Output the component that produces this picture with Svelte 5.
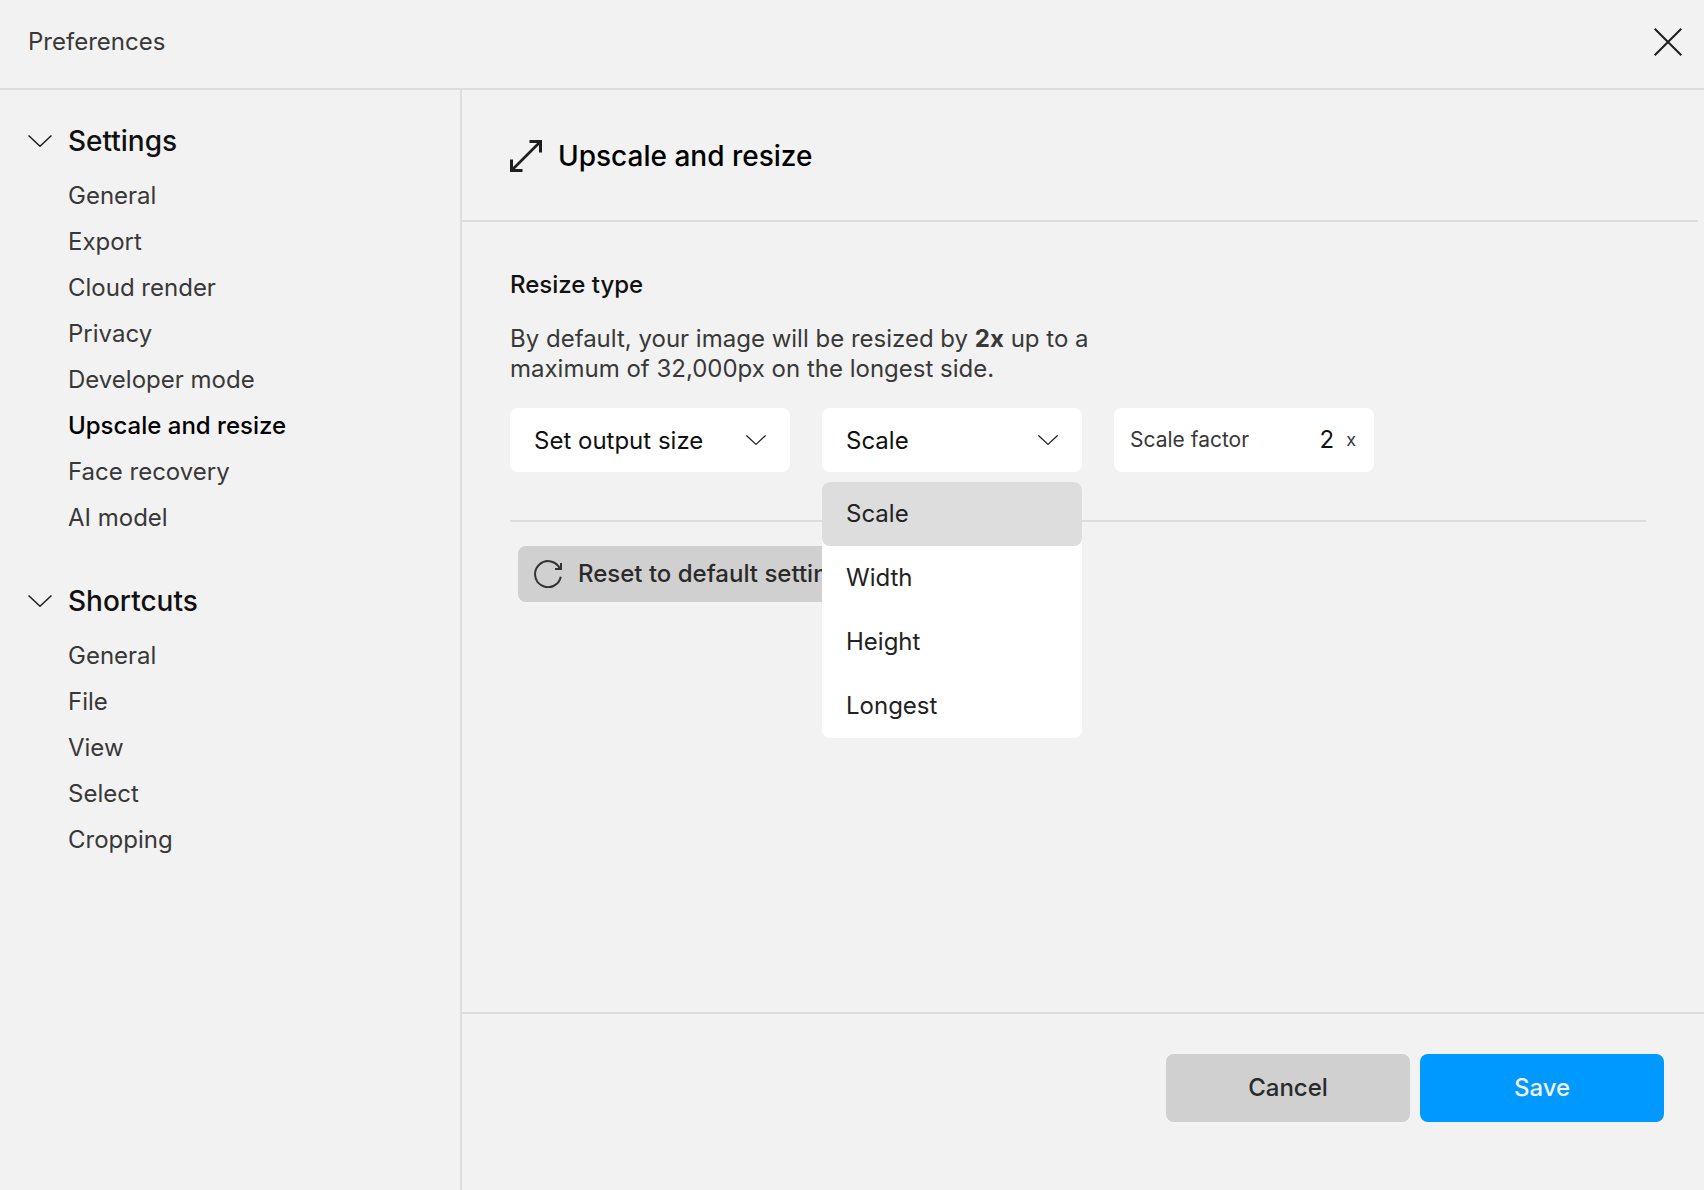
<script lang="ts">
	type NavGroup = { title: string; items: string[] };

	const groups: NavGroup[] = [
		{
			title: 'Settings',
			items: [
				'General',
				'Export',
				'Cloud render',
				'Privacy',
				'Developer mode',
				'Upscale and resize',
				'Face recovery',
				'AI model'
			]
		},
		{ title: 'Shortcuts', items: ['General', 'File', 'View', 'Select', 'Cropping'] }
	];
	const resizeModes = ['Scale', 'Width', 'Height', 'Longest'];

	let collapsed = $state<Record<string, boolean>>({});
	let activeItem = $state('Settings/Upscale and resize');
	let outputMode = $state('Set output size');
	let resizeMode = $state('Scale');
	let scaleFactor = $state('2');
	let menuOpen = $state(true);

	function pickMode(mode: string) {
		resizeMode = mode;
		menuOpen = false;
	}

	// The mode list is our own menu, so keep the native popup closed
	function toggleMenu(event: MouseEvent) {
		event.preventDefault();
		menuOpen = !menuOpen;
	}

	function reset() {
		outputMode = 'Set output size';
		resizeMode = 'Scale';
		scaleFactor = '2';
	}
</script>

{#snippet chevron(size: number)}
	<svg class="chevron" width={size} height={size / 2} viewBox="0 0 24 12" aria-hidden="true">
		<path d="M0.5 0.5 L12 11.2 L23.5 0.5" />
	</svg>
{/snippet}

<div class="preferences">
	<header class="title-bar">
		<h1>Preferences</h1>
		<button class="close" aria-label="Close">
			<svg width="28" height="28" viewBox="0 0 28 28" aria-hidden="true">
				<path d="M0.7 0.7 L27.3 27.3 M27.3 0.7 L0.7 27.3" />
			</svg>
		</button>
	</header>

	<div class="body">
		<nav class="sidebar" aria-label="Preferences sections">
			{#each groups as group}
				<section class="group">
					<button
						class="group-title"
						aria-expanded={!collapsed[group.title]}
						onclick={() => (collapsed[group.title] = !collapsed[group.title])}
					>
						{@render chevron(24)}
						<span>{group.title}</span>
					</button>
					{#if !collapsed[group.title]}
						<ul>
							{#each group.items as item}
								{@const id = `${group.title}/${item}`}
								<li>
									<a href="#{group.title}" class:active={id === activeItem} onclick={() => (activeItem = id)}>
										{item}
									</a>
								</li>
							{/each}
						</ul>
					{/if}
				</section>
			{/each}
		</nav>

		<main class="panel">
			<div class="panel-header">
				<svg width="32" height="32" viewBox="0 0 32 32" aria-hidden="true">
					<path d="M2 30 L30 2" />
					<path class="head" d="M19.5 1.5 H30.5 V12.5 M1.5 19.5 V30.5 H12.5" />
				</svg>
				<h2>Upscale and resize</h2>
			</div>

			<div class="panel-content">
				<h3>Resize type</h3>
				<p>
					By default, your image will be resized by <strong>2x</strong> up to a maximum of 32,000px on the
					longest side.
				</p>

				<div class="controls">
					<div class="dropdown wide">
						<select aria-label="Output size" bind:value={outputMode}>
							<option>Set output size</option>
							<option>Original size</option>
						</select>
						{@render chevron(20)}
					</div>

					<div class="dropdown">
						<select aria-label="Resize mode" bind:value={resizeMode} onmousedown={toggleMenu}>
							{#each resizeModes as mode}
								<option>{mode}</option>
							{/each}
						</select>
						{@render chevron(20)}

						{#if menuOpen}
							<div class="menu" role="listbox" aria-label="Resize mode">
								{#each resizeModes as mode}
									<button role="option" aria-selected={mode === resizeMode} onclick={() => pickMode(mode)}>
										{mode}
									</button>
								{/each}
							</div>
						{/if}
					</div>

					<div class="factor">
						<label for="scale-factor">Scale factor</label>
						<input id="scale-factor" type="text" inputmode="decimal" bind:value={scaleFactor} />
						<span class="unit">x</span>
					</div>
				</div>

				<div class="actions">
					<button class="reset" onclick={reset}>
						<svg width="28" height="28" viewBox="0 0 28 28" aria-hidden="true">
							<path d="M26.8 16.8 A13 13 0 1 1 26 9 M27 3 V9 H21" />
						</svg>
						<span>Reset to default settings</span>
					</button>
				</div>
			</div>

			<footer>
				<button class="cancel">Cancel</button>
				<button class="save">Save</button>
			</footer>
		</main>
	</div>
</div>

<style>
	:global(body) {
		background: #f2f2f2;
	}

	.preferences {
		display: flex;
		flex-direction: column;
		min-height: 100vh;
		font-family: Inter, sans-serif;
		font-size: 24px;
		line-height: 30px;
		color: #383838;
		background: #f2f2f2;
	}

	h1,
	h2,
	h3,
	p,
	ul {
		margin: 0;
		padding: 0;
		font-size: inherit;
		font-weight: 400;
	}

	button,
	select,
	input {
		font: inherit;
		color: inherit;
		border: none;
		background: none;
		padding: 0;
		margin: 0;
	}

	button {
		cursor: pointer;
	}

	svg {
		display: block;
		flex: none;
		fill: none;
		stroke: #1e1e1e;
	}

	.chevron {
		stroke-width: 1.5;
	}

	/* Title bar */
	.title-bar {
		display: flex;
		align-items: center;
		justify-content: space-between;
		height: 84px;
		padding: 0 22px 4px 28px;
		border-bottom: 2px solid #dddddd;
	}

	.close svg {
		stroke-width: 2;
	}

	.body {
		display: flex;
		flex: 1;
	}

	/* Sidebar */
	.sidebar {
		box-sizing: border-box;
		flex: none;
		width: 462px;
		padding: 33px 28px;
		border-right: 2px solid #dddddd;
	}

	.group {
		margin-bottom: 42px;
	}

	.group-title {
		display: flex;
		align-items: center;
		gap: 16px;
		height: 36px;
		margin-bottom: 14px;
		font-size: 28px;
		font-weight: 500;
		color: #111;
	}

	ul {
		list-style: none;
		padding-left: 40px;
	}

	li {
		line-height: 46px;
	}

	a {
		color: inherit;
		text-decoration: none;
	}

	a.active {
		font-weight: 500;
		color: #000;
	}

	/* Panel */
	.panel {
		display: flex;
		flex: 1;
		flex-direction: column;
		min-width: 0;
	}

	.panel-header {
		box-sizing: border-box;
		display: flex;
		align-items: center;
		gap: 16px;
		height: 132px;
		margin-right: 6px;
		padding: 2px 0 0 48px;
		border-bottom: 2px solid #dddddd;
	}

	.panel-header svg {
		stroke-width: 2.6;
	}

	.panel-header .head {
		stroke-width: 3;
	}

	h2 {
		font-size: 28px;
		font-weight: 500;
		color: #000;
	}

	.panel-content {
		flex: 1;
		padding: 48px 58px 0 48px;
	}

	h3 {
		margin-bottom: 24px;
		font-weight: 500;
		color: #111;
	}

	p {
		max-width: 600px;
		margin-bottom: 24px;
	}

	strong {
		font-weight: 700;
	}

	.controls {
		display: flex;
		gap: 32px;
		padding-bottom: 48px;
		border-bottom: 2px solid #dddddd;
	}

	.dropdown {
		position: relative;
		width: 260px;
	}

	.dropdown.wide {
		width: 280px;
	}

	select {
		appearance: none;
		width: 100%;
		height: 64px;
		padding: 2px 60px 0 24px;
		border-radius: 8px;
		color: #111;
		background: #fff;
	}

	/* Arrow sits on top of the native control */
	.dropdown .chevron {
		position: absolute;
		top: 27px;
		right: 24px;
		pointer-events: none;
	}

	.menu {
		position: absolute;
		top: 74px;
		left: 0;
		right: 0;
		z-index: 10;
		display: flex;
		flex-direction: column;
		border-radius: 8px;
		background: #fff;
	}

	.menu button {
		height: 64px;
		padding: 0 24px;
		border-radius: 8px;
		text-align: left;
		color: #222;
	}

	.menu button[aria-selected='true'] {
		background: #dddddd;
	}

	.factor {
		box-sizing: border-box;
		display: flex;
		align-items: center;
		width: 260px;
		height: 64px;
		padding: 0 18px 0 16px;
		border-radius: 8px;
		font-size: 21px;
		background: #fff;
	}

	.factor input {
		flex: 1;
		min-width: 0;
		margin-right: 12px;
		font-size: 24px;
		text-align: right;
		color: #111;
	}

	.unit {
		font-size: 18px;
	}

	.actions {
		padding: 24px 8px;
	}

	.reset {
		display: flex;
		align-items: center;
		gap: 16px;
		height: 56px;
		padding: 0 16px;
		border-radius: 8px;
		font-weight: 500;
		color: #2a2a2a;
		background: #d0d0d0;
	}

	.reset svg {
		stroke: #333;
		stroke-width: 2;
	}

	/* Footer */
	footer {
		display: flex;
		justify-content: flex-end;
		gap: 10px;
		padding: 40px 40px 68px;
		border-top: 2px solid #dddddd;
	}

	footer button {
		width: 244px;
		height: 68px;
		border-radius: 8px;
		font-weight: 500;
	}

	.cancel {
		color: #2a2a2a;
		background: #d0d0d0;
	}

	.save {
		color: #f2f2f2;
		background: #0099ff;
	}
</style>
